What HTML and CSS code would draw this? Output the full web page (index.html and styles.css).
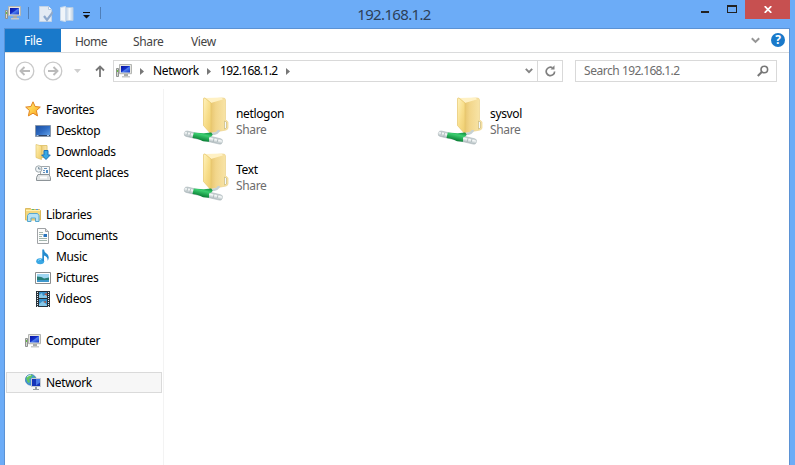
FILE: index.html
```
<!DOCTYPE html>
<html lang="en">
<head>
<meta charset="utf-8">
<title>192.168.1.2</title>
<link rel="stylesheet" href="styles.css">
</head>
<body>
<svg class="defs" width="0" height="0" aria-hidden="true">
  <defs>
    <linearGradient id="screen" x1="0" y1="0" x2="1" y2="1"><stop offset="0" stop-color="#0713a0"/><stop offset=".45" stop-color="#1430c8"/><stop offset=".55" stop-color="#4f7df0"/><stop offset="1" stop-color="#1238c4"/></linearGradient>
    <linearGradient id="desk" x1="0" y1="0" x2="1" y2="1"><stop offset="0" stop-color="#1b4c9c"/><stop offset=".5" stop-color="#2f6cc4"/><stop offset="1" stop-color="#69a8ea"/></linearGradient>
    <linearGradient id="star" x1="0" y1="0" x2="1" y2="1"><stop offset="0" stop-color="#ffe98a"/><stop offset=".5" stop-color="#ffcf4a"/><stop offset="1" stop-color="#f79a1d"/></linearGradient>
    <linearGradient id="flap" x1="0" y1="0" x2="1" y2="1"><stop offset="0" stop-color="#fff3bd"/><stop offset=".5" stop-color="#f8de8b"/><stop offset="1" stop-color="#edcb6d"/></linearGradient>
    <linearGradient id="back" x1="0" y1="0" x2="1" y2="0"><stop offset="0" stop-color="#dfb857"/><stop offset=".45" stop-color="#f2d68b"/><stop offset="1" stop-color="#f9e7ad"/></linearGradient>
    <linearGradient id="pipe" x1="0" y1="0" x2="0" y2="1"><stop offset="0" stop-color="#b4bfc2"/><stop offset=".35" stop-color="#f6f9f9"/><stop offset="1" stop-color="#aab6ba"/></linearGradient>
    <linearGradient id="green" x1="0" y1="0" x2="0" y2="1"><stop offset="0" stop-color="#07863a"/><stop offset=".4" stop-color="#3cce70"/><stop offset="1" stop-color="#067b31"/></linearGradient>
    <symbol id="computer" viewBox="0 0 16 14">
      <path d="M.5 4.500h2v8h-2z" fill="#d4d6d3" stroke="#8f9290"/><path d="M1 6h1v2H1z" fill="#67c43e"/>
      <path d="M3.500.5h12v9.200h-12z" fill="#e5e5e0" stroke="#b3b5b2"/><path d="M5 2h9v6.500H5z" fill="url(#screen)"/>
      <path d="M8 10h4v2H8z" fill="#a9abaa"/><path d="M6 12h8v1.500H6z" fill="#c7c9c8"/>
    </symbol>
    <symbol id="share-folder" viewBox="0 0 48 52">
      <path d="M23 3.500l17-1.500q2.500 0 2.500 2v19.500l1 1q1.500 1 1.500 2v5q0 2-2 2.500l-16 3z" fill="url(#back)" stroke="#ecd28c" stroke-width=".7"/>
      <path d="M41.500 25l2 1v6l-2 1z" fill="#f3faff" stroke="#c5b06d" stroke-width=".6"/>
      <path d="M22 2l17-.5.800 2-12 3.500z" fill="#fff1c4"/>
      <path d="M28 38q7 0 8-4" fill="none" stroke="#c6d1d4" stroke-width="2.500"/>
      <path d="M22 2q-1.500-.5-1.500 1v26.500l7.500 8.500V7z" fill="url(#flap)" stroke="#e6c66b" stroke-width=".7"/>
      <g transform="translate(2 34.500) rotate(13)">
        <rect width="39" height="5.500" rx="2.500" fill="url(#pipe)" stroke="#b2bdc0" stroke-width=".6"/>
        <path d="M9 0l10-1.500 7-2.500 2 2-1 2-2 1.500 1 4-6 1q-4-1.500-11-.8z" fill="url(#green)"/>
        <path d="M3 1v3M6 1v4M30 1v4M34 1v3" stroke="#a4b1b4" stroke-width=".7"/>
      </g>
    </symbol>
  </defs>
</svg>

<div class="window">
  <header class="titlebar">
    <div class="quick">
      <svg width="16" height="14"><use href="#computer"/></svg>
      <i class="sep"></i>
      <svg class="q-props" width="14" height="16" viewBox="0 0 14 16"><path d="M.5.5h9l3 3v12H.5z" fill="#e3ebf4" stroke="#c2d3e6"/><path d="M9.500.5v3h3" fill="#fff" stroke="#b4c7dd"/><path d="M5 10l3 4 6-8" fill="none" stroke="#8da9cd" stroke-width="2.200"/></svg>
      <svg class="q-new" width="14" height="16" viewBox="0 0 14 16"><path d="M6 1.500h7v13H6z" fill="#d3dfec" stroke="#b3cbe5"/><path d="M.5 1.500L5.500.5v15l-5-1z" fill="#eff4f9" stroke="#c9daed"/><path d="M9.500 2v12" stroke="#f1f6fa" stroke-width="2"/></svg>
      <svg class="q-more" width="7" height="7" viewBox="0 0 7 7"><path d="M0 0h7v1H0zM0 3h7L3.500 6.500z" fill="#111"/></svg>
      <i class="sep last"></i>
    </div>
    <h1 class="caption">192.168.1.2</h1>
    <div class="controls">
      <svg class="min" width="8" height="2"><path d="M0 0h8v2H0z" fill="#222"/></svg>
      <svg class="max" width="10" height="8"><path d="M0 0h10v8H0zM1 2v5h8V2z" fill="#222" fill-rule="evenodd"/></svg>
      <div class="close"><svg width="8" height="7" viewBox="0 0 8 7"><path d="M.7.2l6.600 6.600M7.300.2L.7 6.800" stroke="#fff" stroke-width="1.800"/></svg></div>
    </div>
  </header>

  <main class="frame">
    <nav class="tabs">
      <span class="tab file">File</span><span class="tab home">Home</span><span class="tab share">Share</span><span class="tab view">View</span>
      <svg class="expand" width="9" height="7" viewBox="0 0 9 7"><path d="M.8 1.200l3.700 3.700 3.700-3.700" fill="none" stroke="#969696" stroke-width="2"/></svg>
      <span class="help">?</span>
    </nav>

    <div class="toolbar">
      <svg class="nav" width="20" height="20" viewBox="0 0 20 20"><circle cx="10" cy="10" r="8.800" fill="none" stroke="#c9c9c9" stroke-width="1.300"/><path d="M15 10H6M9.500 6L5.500 10l4 4" fill="none" stroke="#bababa" stroke-width="1.900"/></svg>
      <svg class="nav fwd" width="20" height="20" viewBox="0 0 20 20"><circle cx="10" cy="10" r="8.800" fill="none" stroke="#c9c9c9" stroke-width="1.300"/><path d="M5 10h9M10.500 6l4 4-4 4" fill="none" stroke="#bababa" stroke-width="1.900"/></svg>
      <svg class="hist" width="7" height="4"><path d="M0 0h7L3.500 4z" fill="#cfcfcf"/></svg>
      <svg class="up" width="10" height="12" viewBox="0 0 10 12"><path d="M5 12V2M1 5.500l4-4 4 4" fill="none" stroke="#777" stroke-width="1.800"/></svg>
      <div class="address">
        <svg width="16" height="14"><use href="#computer"/></svg>
        <svg class="crumb" width="4" height="7"><path d="M0 0l4 3.500L0 7z" fill="#777"/></svg>
        <span class="c-net">Network</span>
        <svg class="crumb" width="4" height="7"><path d="M0 0l4 3.500L0 7z" fill="#777"/></svg>
        <span class="c-ip">192.168.1.2</span>
        <svg class="crumb" width="4" height="7"><path d="M0 0l4 3.500L0 7z" fill="#777"/></svg>
        <svg class="drop" width="8" height="6" viewBox="0 0 8 6"><path d="M.8.8L4 4.200 7.200.8" fill="none" stroke="#858585" stroke-width="1.900"/></svg>
        <div class="refresh"><svg width="11" height="12" viewBox="0 0 11 12"><path d="M7.500 2.800a4.200 4.200 0 1 0 2.100 3.700" fill="none" stroke="#808080" stroke-width="1.700"/><path d="M5.500 4.500h4V.3z" fill="#808080"/></svg></div>
      </div>
      <div class="search"><span>Search <span class="num">192.168.1.2</span></span><svg width="12" height="12" viewBox="0 0 12 12"><circle cx="7.300" cy="4.500" r="3.300" fill="none" stroke="#777" stroke-width="1.600"/><path d="M5 6.800L.8 11" stroke="#777" stroke-width="2"/></svg></div>
    </div>

    <div class="content">
      <aside class="sidebar">
        <div class="row"><svg class="raise" width="16" height="16" viewBox="0 0 16 16"><path d="M8 .8l2.100 4.700 5.200.6-3.900 3.500 1.100 5.300L8 12.200l-4.600 2.700 1.100-5.300L.7 6.100l5.200-.6z" fill="url(#star)" stroke="#e18420"/></svg><span>Favorites</span></div>
        <div class="row sub"><svg width="16" height="16" viewBox="0 0 16 16"><path d="M.5 2.500h15v11H.5z" fill="url(#desk)" stroke="#8797ac"/><path d="M1 12h14v1H1z" fill="#2c4266"/><path d="M1.500 12.500h2M12 12.500h2" stroke="#a8c4e6"/></svg><span>Desktop</span></div>
        <div class="row sub"><svg width="16" height="16" viewBox="0 0 16 16"><path d="M5 1.500h7v12H5z" fill="url(#back)" stroke="#e2c673"/><path d="M1 .5l5.500 1.500v13.500L1 13.500z" fill="url(#flap)" stroke="#dfc167" stroke-width=".7"/><path d="M9 6.500h4v4.500h2.300L11 15.500 6.700 11H9z" fill="#39a8e4" stroke="#1c73b8"/></svg><span>Downloads</span></div>
        <div class="row sub"><svg width="16" height="16" viewBox="0 0 16 16"><path d="M5.500 1.500h9v9h-9z" fill="#f7f9fa" stroke="#a2a8ac"/><path d="M9 3.500h3M8 5.500h2M8 7.500h2" stroke="#6791ba"/><path d="M11 5h2v3h-2z" fill="#4e8cc8"/><path d="M3 9.500h11l1.500 3v3h-14v-3z" fill="#e0e3e4" stroke="#8d9498"/><path d="M5 12.500h7" stroke="#fff" stroke-width="2"/><circle cx="3.700" cy="4" r="3.200" fill="#eff4f6" stroke="#a0a9ae"/><path d="M3.700 2v2h2" fill="none" stroke="#587080" stroke-width=".8"/></svg><span>Recent places</span></div>
        <div class="row gap"></div>
        <div class="row"><svg width="16" height="16" viewBox="0 0 16 16"><path d="M.5 1.500h5l1 1h8l1 1v9.500H.5z" fill="#f3d77e" stroke="#dcbb60"/><path d="M1 3.500h14" stroke="#fff1b4"/><path d="M7 2.500h2" stroke="#63b963"/><path d="M11 2.500h2" stroke="#5b9cda"/><path d="M2.500 14.500v-6l1.500-2h8.500l1.500 2v6h-3.500v-3.500H6v3.500z" fill="#b6e1f5" stroke="#56a7cf"/></svg><span>Libraries</span></div>
        <div class="row sub"><svg width="16" height="16" viewBox="0 0 16 16"><path d="M2.500.5h8l3 3v12h-11z" fill="#fcfcfc" stroke="#a0a3a6"/><path d="M10.500.5v3h3" fill="#ddd" stroke="#a0a3a6"/><path d="M4 4.500h4M4 6.500h4M4 8.500h3M4 10.500h8M4 12.500h8" stroke="#a3b5ad"/><path d="M8.500 6H12v3H8.500z" fill="#2874bd"/></svg><span>Documents</span></div>
        <div class="row sub"><svg width="16" height="16" viewBox="0 0 16 16"><ellipse cx="5.200" cy="12.300" rx="4" ry="3" fill="#3aa7e4"/><path d="M7.300.5h1.700q0 2.500 2.800 4.200 3.500 3 .7 7.300.8-4-3.500-5.500V12H7.300z" fill="#238bcf"/><path d="M3 11.500q1.500-1.500 3-1" stroke="#8ed8fa" fill="none"/></svg><span>Music</span></div>
        <div class="row sub"><svg width="16" height="16" viewBox="0 0 16 16"><path d="M.5 2.500h15v11H.5z" fill="#fff" stroke="#8b8d8f"/><path d="M2 4h12v8H2z" fill="#9fd6f1"/><path d="M2 6.500q5 0 7 2l5-1V12H2z" fill="#277e78"/><path d="M2 10h12v2H2z" fill="#3e97cb"/></svg><span>Pictures</span></div>
        <div class="row sub"><svg width="16" height="16" viewBox="0 0 16 16"><path d="M1 0h14v16H1z" fill="#27313a"/><path d="M4 1h8v6H4zM4 8h8v7H4z" fill="#368ec9"/><path d="M4 4l3-2 1 3 4-2v4H4zM4 13l4-3 4 4v1H4z" fill="#85c7e9"/><path d="M9 3l3-1v3zM8 11l3-1v2z" fill="#b25947"/><path d="M2.500 1v15M13.500 1v15" stroke="#e8ecef" stroke-dasharray="1 1"/></svg><span>Videos</span></div>
        <div class="row gap"></div>
        <div class="row"><svg width="16" height="14"><use href="#computer"/></svg><span>Computer</span></div>
        <div class="row gap"></div>
        <div class="row selected"><svg class="raise" width="16" height="16" viewBox="0 0 16 16"><circle cx="5.800" cy="5.800" r="5.400" fill="#4298d7" stroke="#2d73b2" stroke-width=".7"/><path d="M1 4Q4 0 8 1L6 4 4 5 5 8 3 9zM9 2l2 4-3 1z" fill="#64c65d"/><path d="M2 3q2-2 4-2" stroke="#c9f0de" fill="none"/><path d="M6.500 4.500h9v8h-9z" fill="#1634b8" stroke="#c4cbd2"/><path d="M11 5h4v3.500l-4 3z" fill="#4b79e5"/><path d="M10 13h2v2h2v1H8v-1h2z" fill="#969ca2"/></svg><span>Network</span></div>
      </aside>
      <section class="files">
        <article class="item"><svg width="48" height="52"><use href="#share-folder"/></svg><div><b>netlogon</b><em>Share</em></div></article>
        <article class="item"><svg width="48" height="52"><use href="#share-folder"/></svg><div><b>sysvol</b><em>Share</em></div></article>
        <article class="item"><svg width="48" height="52"><use href="#share-folder"/></svg><div><b>Text</b><em>Share</em></div></article>
      </section>
    </div>
  </main>
</div>
</body>
</html>
```
FILE: styles.css
```
* { box-sizing: border-box; }
body { margin: 0; background: #6cacf7; font: 12px/16px "Noto Sans", "Open Sans", sans-serif; letter-spacing: -.35px; color: #000; overflow: hidden; }
svg { display: block; flex: none; }
.defs { position: absolute; }
.window { width: 795px; height: 465px; display: flex; flex-direction: column; }
.titlebar { height: 28px; display: grid; grid-template-columns: 345px 98px 1fr; }
.quick { display: flex; align-items: flex-start; padding: 6px 0 0 5px; }
.sep { width: 1px; height: 12px; margin: 1px 0 0 7px; background: #4f7fb9; }
.q-props { margin-left: 10px; }
.q-new { margin-left: 7px; }
.q-more { margin: 6px 0 0 9px; }
.sep.last { margin-left: 10px; }
.caption { margin: 4px 0 0; font-size: 15px; line-height: 20px; font-weight: 400; text-align: center; color: #2c3f57; letter-spacing: -.65px; }
.controls { display: flex; justify-content: flex-end; padding-right: 5px; }
.min { margin: 11px 18px 0 0; }
.max { margin: 5px 8px 0 0; }
.close { width: 45px; height: 19px; background: #c75050; display: flex; align-items: center; justify-content: center; }
.frame { flex: 1; min-height: 0; width: 785px; margin-left: 5px; border: solid #5b92d4; border-width: 1px 1px 0 0; background: #fff; display: flex; flex-direction: column; box-shadow: -1px 0 #5b92d4; }
.tabs { height: 24px; border-bottom: 1px solid #dadbdc; display: flex; color: #444; }
.tab { line-height: 25px; }
.file { width: 56px; height: 23px; background: #1979ca; color: #fff; text-align: center; line-height: 23px; }
.home { margin-left: 14px; width: 58px; letter-spacing: -.55px; }
.share { width: 58px; }
.expand { margin: 8px 0 0 auto; }
.help { width: 14px; height: 14px; margin: 4px 4px 0 11px; border-radius: 50%; background: #1979ca; color: #fff; font-size: 12px; font-weight: 700; line-height: 14px; text-align: center; letter-spacing: 0; }
.toolbar { height: 36px; display: flex; align-items: center; padding-left: 10px; }
.fwd { margin-left: 8px; }
.hist { margin-left: 11px; }
.up { margin-left: 14px; }
.address { width: 450px; height: 22px; margin-left: 8px; border: 1px solid #d9d9d9; display: flex; align-items: center; padding-left: 2px; }
.crumb { margin: 0 0 0 8px; }
.c-net { width: 46px; margin-left: 9px; }
.c-ip { width: 58px; margin-left: 9px; letter-spacing: -.65px; }
.num { letter-spacing: -.65px; }
.drop { margin-left: auto; }
.refresh { width: 25px; height: 20px; margin-left: 4px; border-left: 1px solid #d9d9d9; display: flex; align-items: center; justify-content: center; }
.search { width: 202px; height: 22px; margin-left: 12px; padding: 0 7px 0 8px; border: 1px solid #d9d9d9; display: flex; align-items: center; justify-content: space-between; color: #6d6d6d; letter-spacing: -.45px; }
.content { flex: 1; display: flex; min-height: 0; }
.sidebar { width: 159px; padding: 10px 1px 0; border-right: 1px solid #f3f3f3; }
.row { height: 21px; padding-left: 19px; display: flex; align-items: center; gap: 5px; white-space: nowrap; }
.sub { padding-left: 29px; }
.raise { margin-bottom: 2px; }
.selected { border: 1px solid #dadada; background: #f7f7f7; padding-left: 18px; }
.files { display: grid; grid-template: 56px 56px / 254px 254px; padding: 7px 0 0 19px; }
.item { display: flex; gap: 5px; }
.item div { padding-top: 10px; }
.item b, .item em { display: block; font-weight: 400; font-style: normal; }
.item em { color: #6d6d6d; }
```
